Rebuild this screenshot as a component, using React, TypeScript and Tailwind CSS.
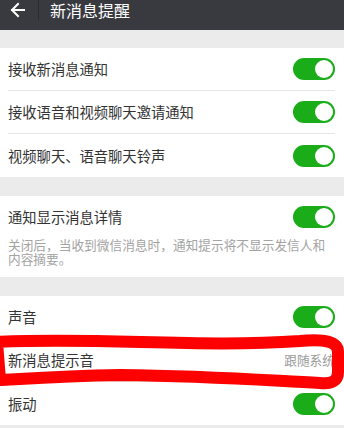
const font = "font-['Noto_Sans_CJK_SC','Noto_Sans',sans-serif]"

function Toggle() {
  return (
    <div className="flex h-[22px] w-[42px] items-center justify-end rounded-full bg-[#1aad19] pr-[2px]">
      <div className="h-[18px] w-[18px] rounded-full bg-white" />
    </div>
  )
}

function Row({ title, value, toggle = true, divider = true, h = 'h-[43px]' }: {
  title: string
  value?: string
  toggle?: boolean
  divider?: boolean
  h?: string
}) {
  return (
    <div className="pl-[8px] pr-[9px]">
      <div className={`flex ${h} items-center justify-between ${divider ? 'border-b border-[#e6e6e6]' : ''}`}>
        <span className="text-[14.3px] text-[#333333]">{title}</span>
        {toggle && <Toggle />}
        {value && <span className="text-[12.7px] text-[#9b9b9b]">{value}</span>}
      </div>
    </div>
  )
}

function Header() {
  return (
    <div className="flex h-[30px] items-start bg-[#393a3f]">
      <div className="flex h-[20px] items-center">
        <svg width="36" height="20" viewBox="0 0 36 20" className="shrink-0">
          <path d="M24 10H12M18 4L12 10L18 16" fill="none" stroke="#fff" strokeWidth="2" strokeLinecap="square" />
        </svg>
        <div className="ml-[2px] h-[20px] w-px bg-[#2c2c30]" />
        <span className="ml-[11px] text-[16px] leading-[20px] text-white">新消息提醒</span>
      </div>
    </div>
  )
}

function Annotation() {
  return (
    <svg className="pointer-events-none absolute left-0 top-0" width="344" height="428" viewBox="0 0 344 428">
      <path
        d="M-3 342 C 100 337, 200 348, 300 341 Q 338 337 338 352 L 338 372 Q 338 385 320 383 C 260 380, 210 376, 120 375 C 60 376, 20 379, 0 380 Z"
        fill="none"
        stroke="#fe0000"
        strokeWidth="12"
        strokeLinejoin="round"
      />
    </svg>
  )
}

export default function App() {
  return (
    <div className={`relative h-[428px] w-[344px] overflow-hidden bg-[#ebebeb] ${font}`}>
      <Header />
      <div className="h-[18px]" />
      <div className="bg-white">
        <Row title="接收新消息通知" />
        <Row title="接收语音和视频聊天邀请通知" />
        <Row title="视频聊天、语音聊天铃声" divider={false} />
      </div>
      <div className="h-[19px]" />
      <div className="bg-white pb-[11px]">
        <Row title="通知显示消息详情" divider={false} h="h-[42px]" />
        <p className="pl-[8px] pr-[8px] text-[12.7px] leading-[14px] text-[#a3a3a3]">
          关闭后，当收到微信消息时，通知提示将不显示发信人和内容摘要。
        </p>
      </div>
      <div className="h-[19px]" />
      <div className="bg-white">
        <Row title="声音" />
        <Row title="新消息提示音" toggle={false} value="跟随系统" />
        <Row title="振动" divider={false} />
      </div>
      <Annotation />
    </div>
  )
}
